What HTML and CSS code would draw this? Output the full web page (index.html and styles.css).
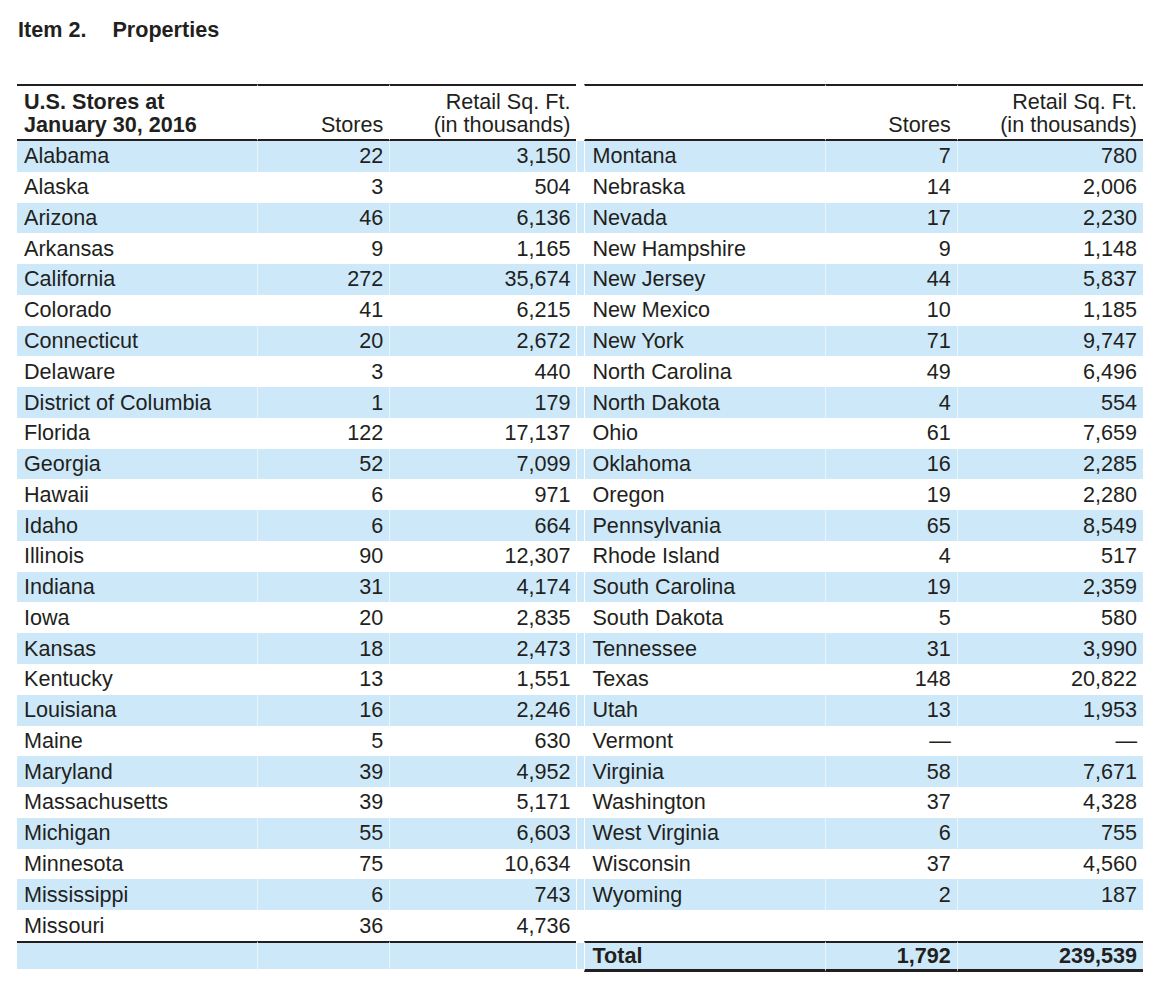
FILE: index.html
```html
<!DOCTYPE html>
<html lang="en">
<head>
    <meta charset="UTF-8">
    <title>Item 2. Properties</title>
    <link rel="stylesheet" href="styles.css">
</head>
<body>
    <!-- Заголовок -->
    <h1 class="item-title"><span class="item-num">Item 2.</span>Properties</h1>

    <!-- Таблица магазинов -->
    <table class="stores">
        <colgroup>
            <col class="c-name">
            <col class="c-stores">
            <col class="c-sqft">
            <col class="c-gap">
            <col class="c-name">
            <col class="c-stores">
            <col class="c-sqft2">
        </colgroup>
        <thead>
            <tr>
                <th class="name">U.S. Stores at<br>January 30, 2016</th>
                <th class="num">Stores</th>
                <th class="num">Retail Sq. Ft.<br>(in thousands)</th>
                <th class="gap"></th>
                <th class="name"></th>
                <th class="num">Stores</th>
                <th class="num">Retail Sq. Ft.<br>(in thousands)</th>
            </tr>
        </thead>
        <tbody>
            <tr class="shade"><td>Alabama</td><td class="num">22</td><td class="num">3,150</td><td class="gap"></td><td>Montana</td><td class="num">7</td><td class="num">780</td></tr>
            <tr><td>Alaska</td><td class="num">3</td><td class="num">504</td><td class="gap"></td><td>Nebraska</td><td class="num">14</td><td class="num">2,006</td></tr>
            <tr class="shade"><td>Arizona</td><td class="num">46</td><td class="num">6,136</td><td class="gap"></td><td>Nevada</td><td class="num">17</td><td class="num">2,230</td></tr>
            <tr><td>Arkansas</td><td class="num">9</td><td class="num">1,165</td><td class="gap"></td><td>New Hampshire</td><td class="num">9</td><td class="num">1,148</td></tr>
            <tr class="shade"><td>California</td><td class="num">272</td><td class="num">35,674</td><td class="gap"></td><td>New Jersey</td><td class="num">44</td><td class="num">5,837</td></tr>
            <tr><td>Colorado</td><td class="num">41</td><td class="num">6,215</td><td class="gap"></td><td>New Mexico</td><td class="num">10</td><td class="num">1,185</td></tr>
            <tr class="shade"><td>Connecticut</td><td class="num">20</td><td class="num">2,672</td><td class="gap"></td><td>New York</td><td class="num">71</td><td class="num">9,747</td></tr>
            <tr><td>Delaware</td><td class="num">3</td><td class="num">440</td><td class="gap"></td><td>North Carolina</td><td class="num">49</td><td class="num">6,496</td></tr>
            <tr class="shade"><td>District of Columbia</td><td class="num">1</td><td class="num">179</td><td class="gap"></td><td>North Dakota</td><td class="num">4</td><td class="num">554</td></tr>
            <tr><td>Florida</td><td class="num">122</td><td class="num">17,137</td><td class="gap"></td><td>Ohio</td><td class="num">61</td><td class="num">7,659</td></tr>
            <tr class="shade"><td>Georgia</td><td class="num">52</td><td class="num">7,099</td><td class="gap"></td><td>Oklahoma</td><td class="num">16</td><td class="num">2,285</td></tr>
            <tr><td>Hawaii</td><td class="num">6</td><td class="num">971</td><td class="gap"></td><td>Oregon</td><td class="num">19</td><td class="num">2,280</td></tr>
            <tr class="shade"><td>Idaho</td><td class="num">6</td><td class="num">664</td><td class="gap"></td><td>Pennsylvania</td><td class="num">65</td><td class="num">8,549</td></tr>
            <tr><td>Illinois</td><td class="num">90</td><td class="num">12,307</td><td class="gap"></td><td>Rhode Island</td><td class="num">4</td><td class="num">517</td></tr>
            <tr class="shade"><td>Indiana</td><td class="num">31</td><td class="num">4,174</td><td class="gap"></td><td>South Carolina</td><td class="num">19</td><td class="num">2,359</td></tr>
            <tr><td>Iowa</td><td class="num">20</td><td class="num">2,835</td><td class="gap"></td><td>South Dakota</td><td class="num">5</td><td class="num">580</td></tr>
            <tr class="shade"><td>Kansas</td><td class="num">18</td><td class="num">2,473</td><td class="gap"></td><td>Tennessee</td><td class="num">31</td><td class="num">3,990</td></tr>
            <tr><td>Kentucky</td><td class="num">13</td><td class="num">1,551</td><td class="gap"></td><td>Texas</td><td class="num">148</td><td class="num">20,822</td></tr>
            <tr class="shade"><td>Louisiana</td><td class="num">16</td><td class="num">2,246</td><td class="gap"></td><td>Utah</td><td class="num">13</td><td class="num">1,953</td></tr>
            <tr><td>Maine</td><td class="num">5</td><td class="num">630</td><td class="gap"></td><td>Vermont</td><td class="num">&mdash;</td><td class="num">&mdash;</td></tr>
            <tr class="shade"><td>Maryland</td><td class="num">39</td><td class="num">4,952</td><td class="gap"></td><td>Virginia</td><td class="num">58</td><td class="num">7,671</td></tr>
            <tr><td>Massachusetts</td><td class="num">39</td><td class="num">5,171</td><td class="gap"></td><td>Washington</td><td class="num">37</td><td class="num">4,328</td></tr>
            <tr class="shade"><td>Michigan</td><td class="num">55</td><td class="num">6,603</td><td class="gap"></td><td>West Virginia</td><td class="num">6</td><td class="num">755</td></tr>
            <tr><td>Minnesota</td><td class="num">75</td><td class="num">10,634</td><td class="gap"></td><td>Wisconsin</td><td class="num">37</td><td class="num">4,560</td></tr>
            <tr class="shade"><td>Mississippi</td><td class="num">6</td><td class="num">743</td><td class="gap"></td><td>Wyoming</td><td class="num">2</td><td class="num">187</td></tr>
            <tr><td>Missouri</td><td class="num">36</td><td class="num">4,736</td><td class="gap"></td><td></td><td></td><td></td></tr>
            <tr class="shade total">
                <td class="left"></td><td class="left"></td><td class="left"></td>
                <td class="gap"></td>
                <td class="right">Total</td><td class="right num">1,792</td><td class="right num">239,539</td>
            </tr>
        </tbody>
    </table>
</body>
</html>
```

FILE: styles.css
```css
/* Основные стили */
body {
    font-family: "Liberation Sans", Arial, sans-serif;
    font-size: 21.6px;
    color: #231f20;
    background-color: #fff;
    margin: 0;
    padding: 17px 0 0 17px;
}

.item-title {
    font-size: 21.6px;
    line-height: 26px;
    font-weight: bold;
    margin: 0 0 41px 1px;
}

.item-num {
    margin-right: 26px;
}

/* Таблица */
.stores {
    border-collapse: separate;
    border-spacing: 0;
    table-layout: fixed;
    width: 1126px;
}

.c-name { width: 240px; }
.c-stores { width: 132px; }
.c-sqft { width: 187px; }
.c-gap { width: 8px; }
.c-sqft2 { width: 186px; }

.stores th,
.stores td {
    padding: 0 6px 0 7px;
    border-left: 1px solid rgba(255, 255, 255, 0.55);
    white-space: nowrap;
    text-align: left;
}

.stores th:first-child,
.stores td:first-child {
    border-left: none;
}

.stores td {
    height: 30.77px;
    line-height: 26px;
    vertical-align: middle;
}

.stores th {
    font-weight: normal;
    line-height: 23px;
    vertical-align: bottom;
    padding-top: 4px;
    padding-bottom: 3px;
    border-top: 2px solid #231f20;
    border-bottom: 2px solid #231f20;
}

.stores th.name {
    font-weight: bold;
}

.stores th.gap {
    border-top-color: #fff;
    border-bottom-color: #fff;
    border-left-color: #fff;
}

.stores .gap {
    padding: 0;
    border-left-color: #fff;
}

.stores .gap + td {
    border-left-color: #fff;
}

.stores .num {
    text-align: right;
}

.shade td {
    background-color: #cde9f9;
}

/* Итоговая строка */
.total td {
    height: 26px;
    font-weight: bold;
    border-top: 2px solid #231f20;
}

.total td.left {
    border-bottom: 3px solid #fff;
}

.total td.gap {
    border-top-color: #fff;
    border-bottom: 3px solid #fff;
}

.total td.right {
    border-bottom: 3px solid #231f20;
}
```
